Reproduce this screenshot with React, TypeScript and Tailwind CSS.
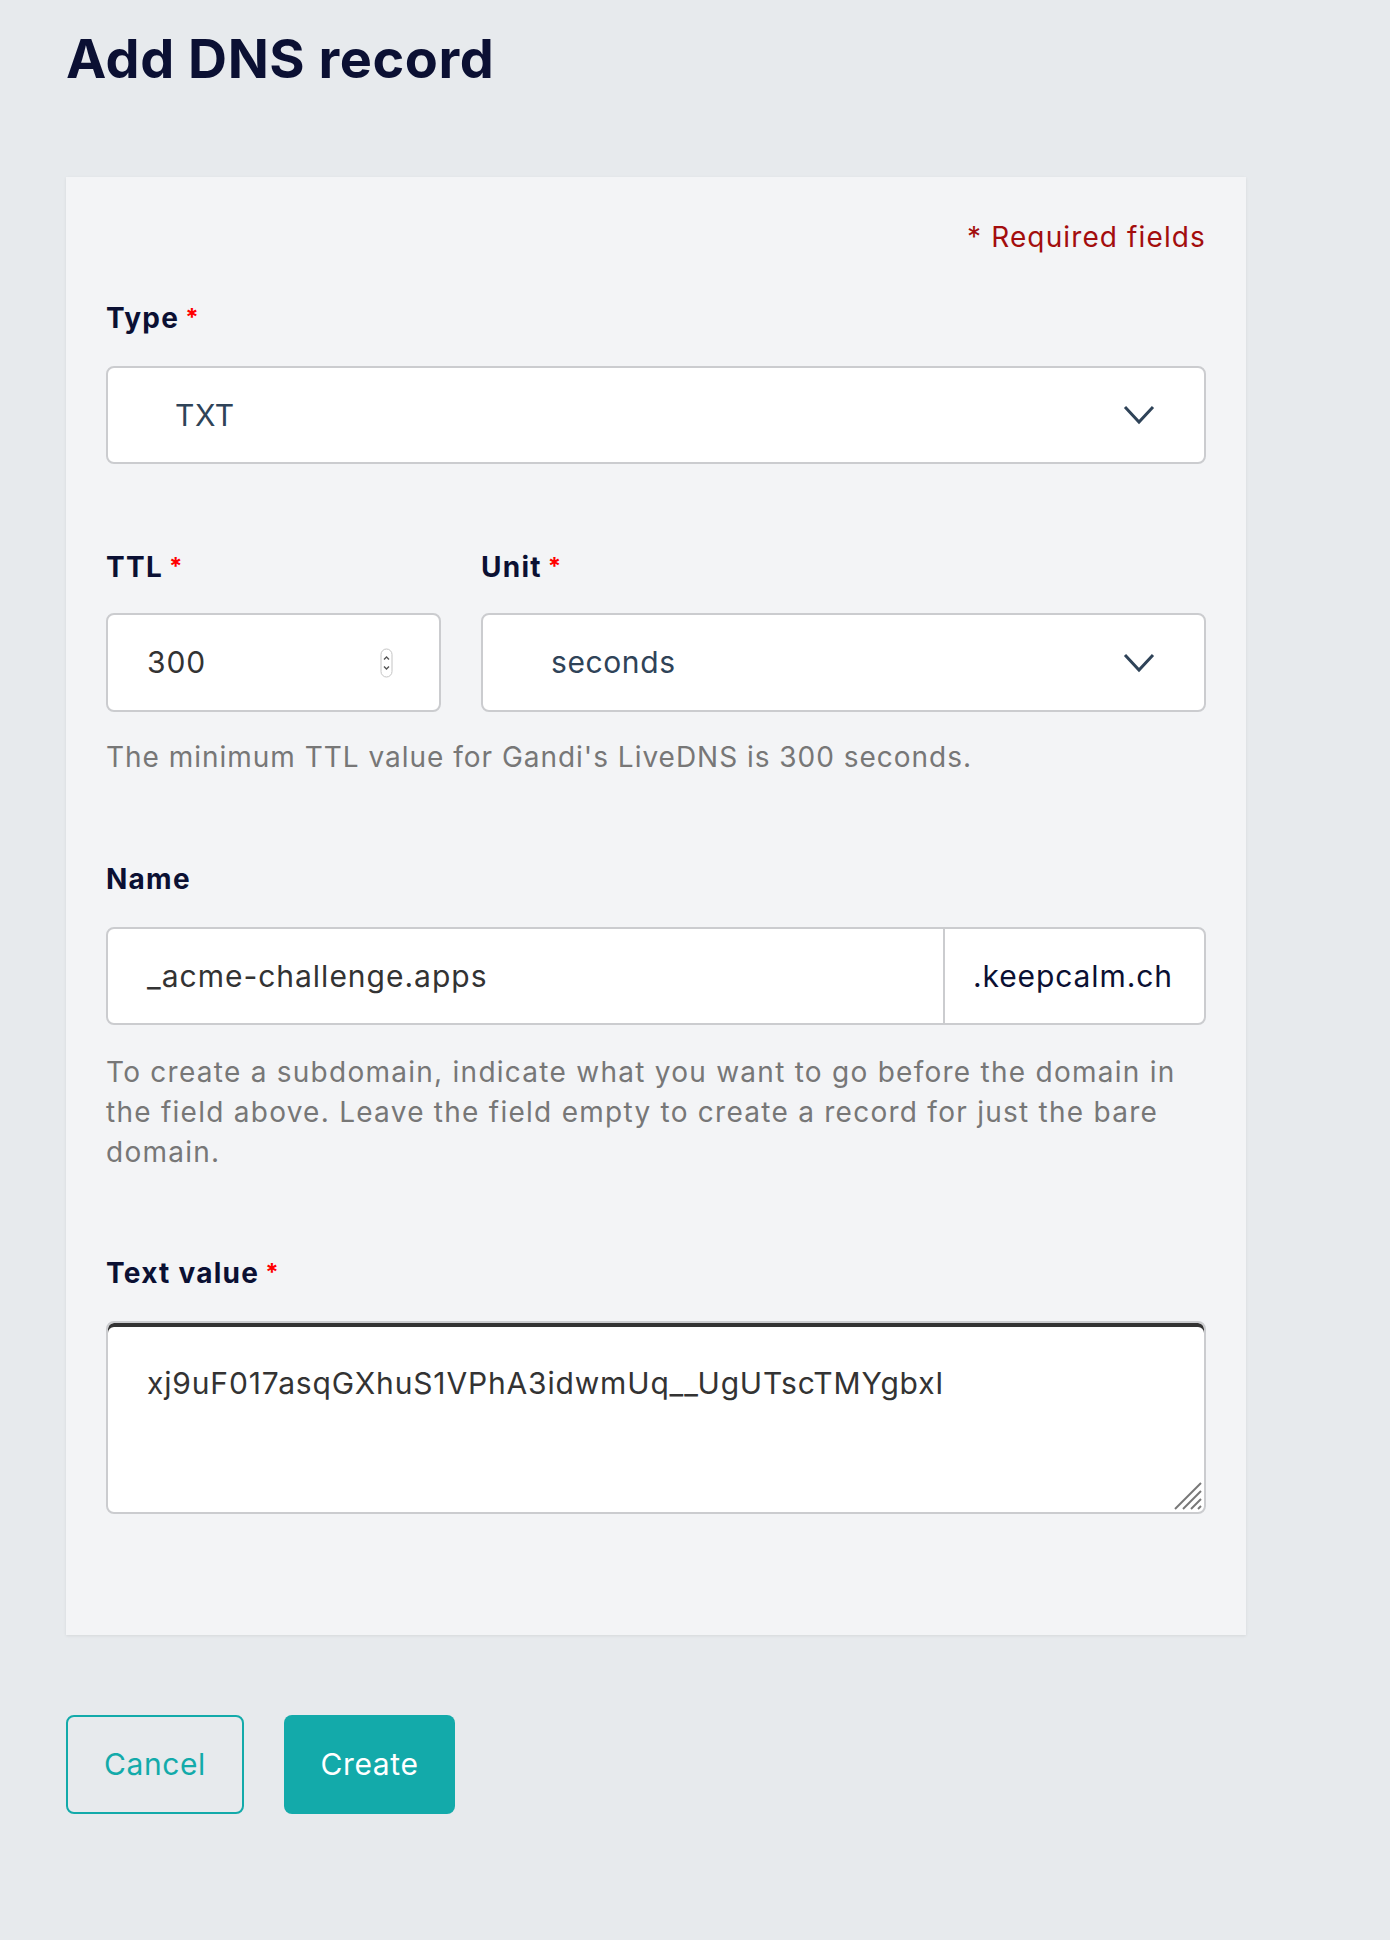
function Label({ text, required }: { text: string; required?: boolean }) {
  return (
    <div className="text-[28px] leading-[40px] font-bold tracking-[0.045em] text-[#0b1033]">
      {text}
      {required && <span className="ml-[6px] text-[24px] align-top text-[#f00]">*</span>}
    </div>
  );
}

function Chevron() {
  return (
    <svg width="32" height="20" viewBox="0 0 32 20" fill="none" stroke="#2f4358" strokeWidth="3">
      <path d="M2 2 L16 17 L30 2" />
    </svg>
  );
}

function Spin() {
  return (
    <svg width="13" height="30" viewBox="0 0 13 30" fill="none">
      <rect x="1" y="1" width="11" height="28" rx="5.5" fill="#fff" stroke="#c4c4c4" />
      <path d="M4 11.5 L6.5 9 L9 11.5" stroke="#555" strokeWidth="1.4" />
      <path d="M4 18.5 L6.5 21 L9 18.5" stroke="#555" strokeWidth="1.4" />
    </svg>
  );
}

function ResizeHandle() {
  return (
    <svg width="30" height="30" viewBox="0 0 30 30" stroke="#777" strokeWidth="2">
      <path d="M2 28 L28 2" />
      <path d="M10 28 L28 10" />
      <path d="M18 28 L28 18" />
      <path d="M25 28 L28 25" />
    </svg>
  );
}

export default function App() {
  return (
    <div className="min-h-[1940px] bg-[#e7eaed] pl-[66px] pt-[32px] [font-family:Inter,sans-serif]">
      <h1 className="text-[54px] leading-[54px] font-bold tracking-[0.01em] text-[#0b1033]">
        Add DNS record
      </h1>

      <div className="mt-[91px] w-[1180px] bg-[#f3f4f6] px-[40px] pt-[40px] pb-[121px] shadow-[0_1px_3px_rgba(0,0,0,0.08)]">
        <p className="text-right text-[28px] leading-[40px] tracking-[0.04em] text-[#a30d0d]">* Required fields</p>

        <div className="mt-[41px]">
          <Label text="Type" required />
        </div>
        <div className="mt-[28px] flex h-[98px] items-center justify-between rounded-lg border-2 border-[#cbcccf] bg-white pl-[67px] pr-[49px]">
          <span className="text-[30px] tracking-[0.02em] text-[#2f4358]">TXT</span>
          <Chevron />
        </div>

        <div className="mt-[83px] flex gap-[40px]">
          <div className="w-[335px]">
            <Label text="TTL" required />
            <div className="mt-[26px] flex h-[99px] items-center justify-between rounded-lg border-2 border-[#cbcccf] bg-white pl-[39px] pr-[46px]">
              <span className="text-[30px] tracking-[0.03em] text-[#333]">300</span>
              <Spin />
            </div>
          </div>
          <div className="flex-1">
            <Label text="Unit" required />
            <div className="mt-[26px] flex h-[99px] items-center justify-between rounded-lg border-2 border-[#cbcccf] bg-white pl-[68px] pr-[49px]">
              <span className="text-[30px] tracking-[0.02em] text-[#2f4358]">seconds</span>
              <Chevron />
            </div>
          </div>
        </div>
        <p className="mt-[25px] text-[28px] leading-[40px] tracking-[0.035em] text-[#777]">
          The minimum TTL value for Gandi's LiveDNS is 300 seconds.
        </p>

        <div className="mt-[82px]">
          <Label text="Name" />
        </div>
        <div className="mt-[28px] flex h-[98px] rounded-lg border-2 border-[#cbcccf] bg-white">
          <div className="flex flex-1 items-center pl-[39px] text-[30px] tracking-[0.033em] text-[#333]">_acme-challenge.apps</div>
          <div className="flex w-[261px] items-center border-l-2 border-[#cbcccf] pl-[28px] text-[30px] tracking-[0.03em] text-[#0b1033]">
            .keepcalm.ch
          </div>
        </div>
        <p className="mt-[27px] text-[28px] leading-[40px] tracking-[0.045em] text-[#777]">
          <span className="block whitespace-nowrap">To create a subdomain, indicate what you want to go before the domain in</span>
          <span className="block whitespace-nowrap">the field above. Leave the field empty to create a record for just the bare</span>
          <span className="block whitespace-nowrap">domain.</span>
        </p>

        <div className="mt-[81px]">
          <Label text="Text value" required />
        </div>
        <div className="relative mt-[28px] h-[193px] rounded-lg border-2 border-[#cbcccf] bg-white pl-[39px] pt-[40px] shadow-[inset_0_4px_0_#333]">
          <span className="text-[30px] leading-[40px] tracking-[0.028em] text-[#333]">xj9uF017asqGXhuS1VPhA3idwmUq__UgUTscTMYgbxI</span>
          <div className="absolute bottom-[1px] right-[1px]">
            <ResizeHandle />
          </div>
        </div>
      </div>

      <div className="mt-[80px] flex gap-[40px]">
        <button className="h-[99px] w-[178px] rounded-lg border-2 border-[#13aaaa] text-[30px] tracking-[0.02em] text-[#13aaaa]">
          Cancel
        </button>
        <button className="h-[99px] w-[171px] rounded-lg bg-[#13aaaa] text-[30px] tracking-[0.02em] text-white">Create</button>
      </div>
    </div>
  );
}
